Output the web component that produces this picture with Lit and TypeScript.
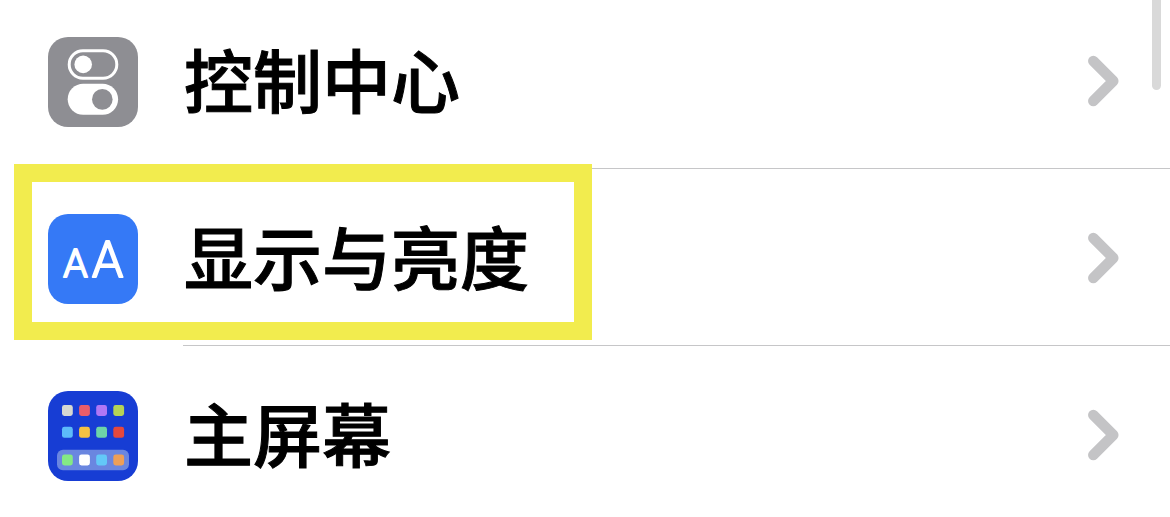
import { LitElement, html, css, svg } from "lit";
import { customElement } from "lit/decorators.js";

interface Entry {
  id: string;
  label: string;
  icon: unknown;
  highlighted?: boolean;
}

const controlCenterIcon = html`
  <svg class="icon gray" viewBox="0 0 90 90" aria-hidden="true">
    <rect x="21.2" y="13.8" width="47.6" height="27.4" rx="13.7" fill="none" stroke="#fff" stroke-width="3" />
    <circle cx="35.2" cy="27.4" r="8.8" fill="#fff" />
    <rect x="19.7" y="46.8" width="50.4" height="31" rx="15.5" fill="#fff" />
    <circle cx="54.3" cy="62.4" r="10.3" fill="#8e8e93" />
  </svg>
`;

const displayIcon = html`
  <svg class="icon blue" viewBox="0 0 90 90" aria-hidden="true">
    <g class="letters">
      <text x="27.5" y="63" font-size="39">A</text>
      <text x="59.5" y="63" font-size="50">A</text>
    </g>
  </svg>
`;

const appColors = [
  ["#d6d8d2", "#ea5d6a", "#b077f5", "#b5d355"],
  ["#5cbbfa", "#f5c142", "#6dd5a8", "#e5483d"],
  ["#84e985", "#ffffff", "#63c8f8", "#ee9f57"],
];
const appRows = [14, 35.8, 63.5];

const homeScreenIcon = html`
  <svg class="icon navy" viewBox="0 0 90 90" aria-hidden="true">
    <rect x="9" y="58.8" width="72" height="20.4" rx="6" fill="#6a86e0" />
    ${appColors.map((row, r) =>
      row.map(
        (fill, c) => svg`<rect x=${14 + c * 17.1} y=${appRows[r]} width="10.8" height="11" rx="2.4" fill=${fill} />`
      )
    )}
  </svg>
`;

const entries: Entry[] = [
  { id: "control-center", label: "控制中心", icon: controlCenterIcon },
  { id: "display", label: "显示与亮度", icon: displayIcon, highlighted: true },
  { id: "home-screen", label: "主屏幕", icon: homeScreenIcon },
];

@customElement("settings-row")
class SettingsRow extends LitElement {
  static properties = { entry: { attribute: false } };
  declare entry: Entry;

  static styles = css`
    :host {
      display: block;
      position: relative;
    }
    .row {
      display: flex;
      align-items: stretch;
      height: 177px;
      padding-left: 48px;
      color: #000;
      text-decoration: none;
    }
    .icon {
      flex: none;
      align-self: center;
      width: 90px;
      height: 90px;
      margin-top: 3px;
      border-radius: 20px;
    }
    .gray {
      background: #8e8e93;
    }
    .blue {
      background: #3579f6;
    }
    .navy {
      background: #173dd4;
    }
    .letters {
      font-family: Roboto, sans-serif;
      font-weight: 300;
      text-anchor: middle;
      fill: #fff;
      stroke: #fff;
      stroke-width: 2;
      stroke-linejoin: round;
    }
    .body {
      flex: 1;
      display: flex;
      align-items: center;
      justify-content: space-between;
      margin-left: 45px;
      padding: 2px 50px 0 1px;
      border-bottom: 1px solid #c6c6c8;
    }
    .label {
      padding-bottom: 6px;
      font: 500 69px/96px "Noto Sans CJK SC", sans-serif;
      -webkit-text-stroke: 1px #000;
      white-space: nowrap;
    }
    .chevron {
      flex: none;
      width: 34px;
      height: 52px;
    }
    .highlight {
      position: absolute;
      box-sizing: border-box;
      top: -5px;
      left: 14px;
      width: 578px;
      height: 176px;
      border: 18px solid #f2ec4e;
      pointer-events: none;
    }
  `;

  render() {
    const { id, label, icon, highlighted } = this.entry;
    return html`
      <a class="row" href="#${id}">
        ${icon}
        <span class="body">
          <span class="label">${label}</span>
          <svg class="chevron" viewBox="0 0 34 52" aria-hidden="true">
            <path
              d="M7.3 6 27.3 26 7.3 46"
              fill="none"
              stroke="#c4c4c6"
              stroke-width="10.5"
              stroke-linecap="round"
              stroke-linejoin="round"
            />
          </svg>
        </span>
      </a>
      ${highlighted ? html`<div class="highlight"></div>` : null}
    `;
  }
}

@customElement("app-root")
class AppRoot extends LitElement {
  static styles = css`
    :host {
      display: block;
      position: relative;
      height: 100vh;
      overflow: hidden;
      background: #fff;
    }
    .list {
      margin: -8px 0 0;
      padding: 0;
      list-style: none;
    }
    .thumb {
      position: absolute;
      top: -10px;
      right: 9px;
      width: 9px;
      height: 100px;
      border-radius: 5px;
      background: #d9d9d9;
    }
  `;

  render() {
    return html`
      <ul class="list">
        ${entries.map((entry) => html`<li><settings-row .entry=${entry}></settings-row></li>`)}
      </ul>
      <div class="thumb"></div>
    `;
  }
}
